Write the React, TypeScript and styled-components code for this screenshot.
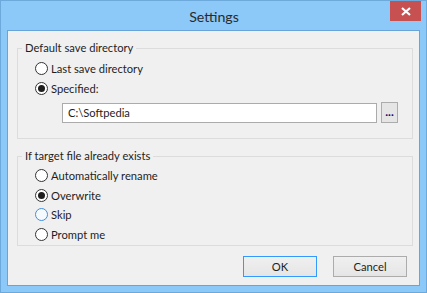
import styled, { createGlobalStyle } from "styled-components";

const Global = createGlobalStyle`
  html, body {
    margin: 0;
    padding: 0;
    background: #8cc8f8;
  }
  * {
    box-sizing: border-box;
  }
`;

const Window = styled.div`
  width: 427px;
  height: 293px;
  display: flex;
  flex-direction: column;
  background: #8cc8f8;
  border: 1px solid #6ea9dc;
  padding: 0 6px 6px;
  font-family: Lato, "Noto Sans", sans-serif;
  font-size: 11.2px;
  color: #1e1e1e;
`;

const TitleBar = styled.div`
  height: 29px;
  display: grid;
  grid-template-columns: 1fr auto 1fr;
  margin: 0 -1px 0 0;
`;

const Title = styled.div`
  grid-column: 2;
  align-self: center;
  font-size: 14.2px;
  color: #2b2b2b;
  padding-top: 1px;
`;

const CloseBtn = styled.button`
  grid-column: 3;
  justify-self: end;
  align-self: start;
  width: 31px;
  height: 20px;
  border: 0;
  padding: 0;
  background: #c75050;
  display: flex;
  align-items: center;
  justify-content: center;
`;

const Client = styled.div`
  flex: 1;
  display: flex;
  flex-direction: column;
  background: #f0f0f0;
  border: 1px solid #6aa3d8;
  padding: 9px 6px 8px 9px;
`;

const Group = styled.fieldset<{ $gap?: number }>`
  margin: ${(p) => p.$gap ?? 0}px 0 0;
  padding: 2px 14px ${(p) => (p.$gap ? 1 : 15)}px 17px;
  border: 1px solid #dcdcdc;
  min-width: 0;
`;

const Legend = styled.legend`
  margin-left: -13px;
  padding: 0 3px;
  line-height: 16px;
`;

const Option = styled.label<{ $h: number }>`
  display: flex;
  align-items: center;
  gap: 3px;
  height: ${(p) => p.$h}px;
`;

const Radio = styled.span<{ $checked?: boolean; $hover?: boolean }>`
  width: 13px;
  height: 13px;
  border-radius: 50%;
  border: 1px solid ${(p) => (p.$hover ? "#3c8fe0" : "#333")};
  background: ${(p) => (p.$hover ? "#f5faff" : "#fff")};
  display: flex;
  align-items: center;
  justify-content: center;

  &::after {
    content: "";
    width: 7px;
    height: 7px;
    border-radius: 50%;
    background: #1e1e1e;
    display: ${(p) => (p.$checked ? "block" : "none")};
  }
`;

const PathRow = styled.div`
  display: flex;
  align-items: center;
  gap: 4px;
  margin: 4px 0 0 27px;
`;

const PathInput = styled.div`
  flex: 1;
  height: 20px;
  background: #fff;
  border: 1px solid #ababab;
  padding: 0 5px;
  line-height: 18px;
`;

const Browse = styled.button`
  width: 17px;
  height: 21px;
  padding: 0 0 4px;
  border: 1px solid #acacac;
  background: #e5e5e5;
  color: #20006a;
  font-family: inherit;
  font-size: 12px;
  font-weight: bold;
  line-height: 1;
  display: flex;
  align-items: flex-end;
  justify-content: center;
`;

const Actions = styled.div`
  display: flex;
  justify-content: flex-end;
  gap: 16px;
  margin-top: 10px;
  padding-right: 6px;
`;

const Button = styled.button<{ $default?: boolean }>`
  width: 74px;
  height: 21px;
  padding: 0;
  border: 1px solid ${(p) => (p.$default ? "#3399ff" : "#acacac")};
  background: linear-gradient(#f0f0f0, #e5e5e5);
  font-family: inherit;
  font-size: 11.2px;
  color: #1e1e1e;
`;

const App = () => {
  return (
    <>
      <Global />
      <Window>
        <TitleBar>
          <Title>Settings</Title>
          <CloseBtn aria-label="Close">
            <svg width="10" height="9" viewBox="0 0 10 9">
              <path d="M1 1L9 8M9 1L1 8" stroke="#fff" strokeWidth="2.2" />
            </svg>
          </CloseBtn>
        </TitleBar>
        <Client>
          <Group>
            <Legend>Default save directory</Legend>
            <Option $h={20}>
              <Radio />
              Last save directory
            </Option>
            <Option $h={20}>
              <Radio $checked />
              Specified:
            </Option>
            <PathRow>
              <PathInput>C:\Softpedia</PathInput>
              <Browse>...</Browse>
            </PathRow>
          </Group>
          <Group $gap={9}>
            <Legend>If target file already exists</Legend>
            <Option $h={19.5}>
              <Radio />
              Automatically rename
            </Option>
            <Option $h={19.5}>
              <Radio $checked />
              Overwrite
            </Option>
            <Option $h={19.5}>
              <Radio $hover />
              Skip
            </Option>
            <Option $h={19.5}>
              <Radio />
              Prompt me
            </Option>
          </Group>
          <Actions>
            <Button $default>OK</Button>
            <Button>Cancel</Button>
          </Actions>
        </Client>
      </Window>
    </>
  );
};

export default App;
